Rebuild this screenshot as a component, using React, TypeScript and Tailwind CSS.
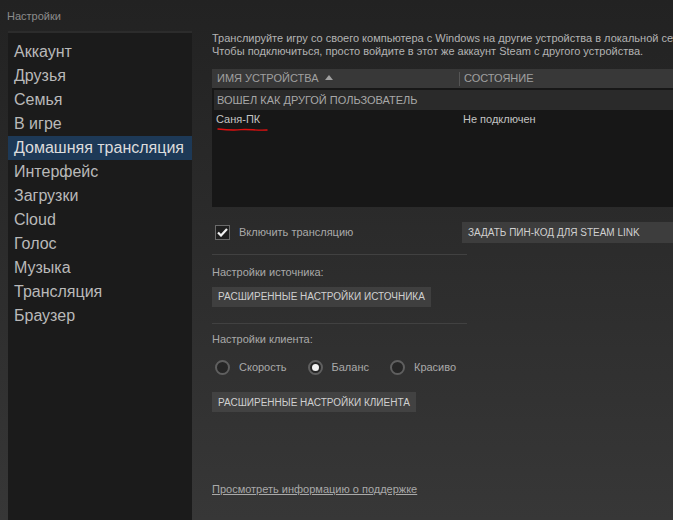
export default function App() {
  const menu = [
    "Аккаунт",
    "Друзья",
    "Семья",
    "В игре",
    "Домашняя трансляция",
    "Интерфейс",
    "Загрузки",
    "Cloud",
    "Голос",
    "Музыка",
    "Трансляция",
    "Браузер",
  ];

  return (
    <div className="w-[673px] h-[520px] overflow-hidden flex flex-col bg-gradient-to-b from-[#222222] to-[#373737] font-['Liberation_Sans',Arial,sans-serif]">
      {/* Title */}
      <div className="h-[31px] shrink-0 pl-[7px] pt-[8px] text-[11px] text-[#8c8c8c]">Настройки</div>

      <div className="flex flex-1 min-h-0">
        {/* Sidebar */}
        <div className="ml-[8px] w-[184px] shrink-0 bg-[#1b1b1b] border-t-2 border-[#2c2c2c] pt-[7px]">
          {menu.map((item) => (
            <div
              key={item}
              className={
                item === "Домашняя трансляция"
                  ? "h-[24px] leading-[24px] pl-[6px] text-[16px] text-[#dcdcdc] bg-[#1d3957]"
                  : "h-[24px] leading-[24px] pl-[6px] text-[16px] text-[#b9b9b9]"
              }
            >
              {item}
            </div>
          ))}
        </div>

        {/* Main */}
        <div className="ml-[20px] flex-1 min-w-0 overflow-hidden flex flex-col text-[11px] text-[#b3b3b3]">
          <div className="leading-[13px] mt-[1px] whitespace-nowrap">
            <div>Транслируйте игру со своего компьютера с Windows на другие устройства в локальной сети.</div>
            <div>Чтобы подключиться, просто войдите в этот же аккаунт Steam с другого устройства.</div>
          </div>

          {/* Device table */}
          <div className="mt-[11px] w-[470px] flex flex-col">
            <div className="h-[19px] flex items-center bg-[#383838] text-[#a0a0a0] whitespace-nowrap">
              <div className="w-[247px] pl-[5px] flex items-center gap-[6px]">
                ИМЯ УСТРОЙСТВА
                <svg width="8" height="5" viewBox="0 0 8 5" className="mt-[-2px]">
                  <path d="M0 5 L4 0 L8 5 Z" fill="#a0a0a0" />
                </svg>
              </div>
              <div className="h-[14px] w-px bg-[#555555]" />
              <div className="pl-[4px]">СОСТОЯНИЕ</div>
            </div>
            <div className="h-[119px] bg-[#171717] pt-[2px] pl-[2px]">
              <div className="h-[20px] bg-[#2a2a2a] pl-[3px] flex items-center text-[#a8a8a8] whitespace-nowrap">
                ВОШЕЛ КАК ДРУГОЙ ПОЛЬЗОВАТЕЛЬ
              </div>
              <div className="relative h-[18px] flex items-center text-[#c4c4c4] whitespace-nowrap">
                <div className="w-[249px] pl-[2px]">Саня-ПК</div>
                <div>Не подключен</div>
                <svg
                  className="absolute left-[3px] top-[17px]"
                  width="52"
                  height="6"
                  viewBox="0 0 52 6"
                >
                  <path
                    d="M1 2 C10 3 16 3.6 24 2.6 C32 1.8 40 3.8 50 3"
                    stroke="#e01010"
                    strokeWidth="1.4"
                    fill="none"
                    strokeLinecap="round"
                  />
                </svg>
              </div>
            </div>
          </div>

          {/* Enable streaming row */}
          <div className="mt-[15px] flex items-center h-[21px]">
            <div className="w-[250px] flex items-center">
              <div className="ml-[3px] w-[15px] h-[15px] border border-[#6a6a6a] bg-[#1f1f1f] flex items-center justify-center">
                <svg width="11" height="9" viewBox="0 0 11 9">
                  <path d="M1 4.5 L4 7.5 L10 1" stroke="#f2f2f2" strokeWidth="2.2" fill="none" />
                </svg>
              </div>
              <span className="ml-[9px] text-[#a9a9a9]">Включить трансляцию</span>
            </div>
            <div className="h-[21px] flex-1 bg-[#3d3d3d] pl-[6px] flex items-center text-[10px] text-[#d0d0d0] whitespace-nowrap">
              ЗАДАТЬ ПИН-КОД ДЛЯ STEAM LINK
            </div>
          </div>

          <div className="mt-[11px] w-[255px] h-px bg-[#414141]" />

          <div className="mt-[9px] text-[#a9a9a9]">Настройки источника:</div>
          <div className="mt-[6px] self-start h-[20px] px-[6px] bg-[#3f3f3f] flex items-center text-[10px] text-[#d0d0d0] whitespace-nowrap">
            РАСШИРЕННЫЕ НАСТРОЙКИ ИСТОЧНИКА
          </div>

          <div className="mt-[16px] w-[255px] h-px bg-[#414141]" />

          <div className="mt-[7px] text-[#a9a9a9]">Настройки клиента:</div>
          <div className="mt-[12px] flex items-center h-[16px] text-[#a9a9a9]">
            {[
              ["Скорость", false],
              ["Баланс", true],
              ["Красиво", false],
            ].map(([label, on]) => (
              <div key={label as string} className="flex items-center mr-[18px]">
                <div className="ml-[3px] w-[15px] h-[15px] rounded-full border-2 border-[#5f5f5f] bg-[#262626] flex items-center justify-center">
                  {on ? <div className="w-[7px] h-[7px] rounded-full bg-[#f2f2f2]" /> : null}
                </div>
                <span className="ml-[9px]">{label as string}</span>
              </div>
            ))}
          </div>

          <div className="mt-[17px] self-start h-[20px] px-[6px] bg-[#424242] flex items-center text-[10px] text-[#d0d0d0] whitespace-nowrap">
            РАСШИРЕННЫЕ НАСТРОЙКИ КЛИЕНТА
          </div>

          <a className="mt-[69px] self-start underline text-[#a9a9a9] cursor-pointer">
            Просмотреть информацию о поддержке
          </a>
        </div>
      </div>
    </div>
  );
}
